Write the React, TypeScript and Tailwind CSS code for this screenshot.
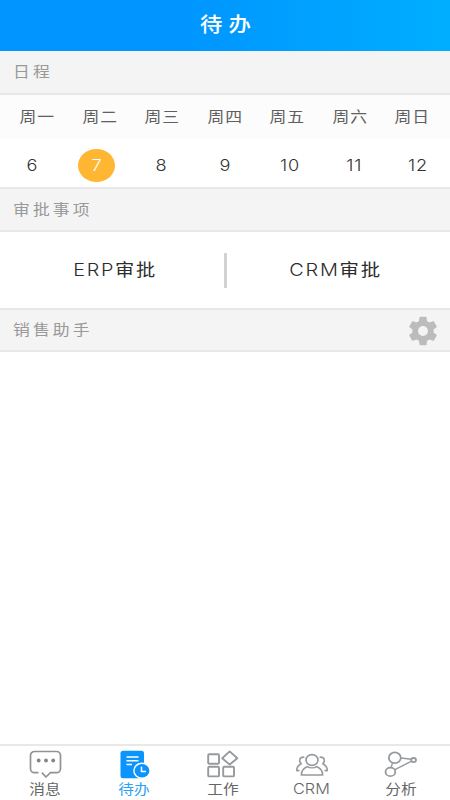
import React from 'react';

const days = ['周一', '周二', '周三', '周四', '周五', '周六', '周日'];
const dates = [6, 7, 8, 9, 10, 11, 12];

function Section({ title, className, children }: { title: string; className: string; children?: React.ReactNode }) {
  return (
    <div className={`flex shrink-0 items-center justify-between border-b-2 border-[#e8e8e8] bg-[#f4f4f4] pl-[13px] pr-[10px] ${className}`}>
      <span className="origin-left scale-x-[1.12] pb-px text-[15px] leading-none tracking-[2.8px] text-[#999]">{title}</span>
      {children}
    </div>
  );
}

function Gear() {
  return (
    <svg width="34" height="34" viewBox="0 0 24 24" fill="#bcbcbc" className="mt-px">
      <path d="M19.43 12.98c.04-.32.07-.64.07-.98s-.03-.66-.07-.98l2.11-1.65c.19-.15.24-.42.12-.64l-2-3.46c-.12-.22-.39-.3-.61-.22l-2.49 1c-.52-.4-1.08-.73-1.69-.98l-.38-2.65A.488.488 0 0 0 14 2h-4c-.25 0-.46.18-.49.42l-.38 2.65c-.61.25-1.17.59-1.69.98l-2.49-1c-.23-.09-.49 0-.61.22l-2 3.46c-.13.22-.07.49.12.64l2.11 1.65c-.04.32-.07.65-.07.98s.03.66.07.98l-2.11 1.65c-.19.15-.24.42-.12.64l2 3.46c.12.22.39.3.61.22l2.49-1c.52.4 1.08.73 1.69.98l.38 2.65c.03.24.24.42.49.42h4c.25 0 .46-.18.49-.42l.38-2.65c.61-.25 1.17-.59 1.69-.98l2.49 1c.23.09.49 0 .61-.22l2-3.46c.12-.22.07-.49-.12-.64l-2.11-1.65zM12 15.5c-1.93 0-3.5-1.57-3.5-3.5s1.57-3.5 3.5-3.5 3.5 1.57 3.5 3.5-1.57 3.5-3.5 3.5z" />
    </svg>
  );
}

const svgProps = { width: 36, height: 32, viewBox: '0 0 36 32', fill: 'none', stroke: '#969a9d' } as const;

function MessageIcon() {
  return (
    <svg {...svgProps} stroke="#929292" strokeWidth="1.7" strokeLinejoin="round">
      <path d="M11.5 24.7H7.5a4 4 0 0 1-4-4V7.5a4 4 0 0 1 4-4h22a4 4 0 0 1 4 4v13.2a4 4 0 0 1-4 4h-6l-4.6 4.3-4-4.3" />
      <g fill="#858585" stroke="none">
        <circle cx="11.7" cy="12.5" r="1.9" />
        <circle cx="19" cy="12.5" r="1.9" />
        <circle cx="26.2" cy="12.5" r="1.9" />
      </g>
    </svg>
  );
}

function TodoIcon() {
  return (
    <svg {...svgProps} stroke="none">
      <rect x="4.5" y="2.7" width="23.5" height="27.5" rx="2.5" fill="#0a94fc" />
      <path d="M10.5 9h12M10.5 12.7h12M10.5 16.4h5.5" stroke="#fff" strokeWidth="1.5" />
      <ellipse cx="26" cy="22.7" rx="8.8" ry="8.3" fill="#fff" />
      <ellipse cx="26" cy="22.7" rx="7.4" ry="6.8" fill="#0a94fc" />
      <path d="M25.5 18.7v4.7h4.5" stroke="#fff" strokeWidth="1.5" />
    </svg>
  );
}

function WorkIcon() {
  return (
    <svg {...svgProps} strokeWidth="1.9" strokeLinejoin="round">
      <rect x="3.2" y="6.2" width="10.8" height="9.6" rx="1" />
      <rect x="3.2" y="18.8" width="10.8" height="9.6" rx="1" />
      <rect x="18.2" y="18.8" width="10.8" height="9.6" rx="1" />
      <path d="M24.7 3.4l7.6 6.8-7.6 6.4-7.5-6.4z" />
    </svg>
  );
}

function PeopleIcon() {
  return (
    <svg {...svgProps} strokeWidth="1.6" strokeLinejoin="round" strokeLinecap="round">
      <ellipse cx="18" cy="12" rx="6" ry="5.4" />
      <path d="M7.3 27c0-4.6 2.4-6.8 6-8.4 2.6 1.6 6.8 1.6 9.4 0 3.6 1.6 6 3.8 6 8.4z" />
      <path d="M9.8 9.2c-4.3-.4-5.3 4-2.6 6.6-2.8 1.4-4.5 3.4-4.5 6.8h2.2M26.2 9.2c4.3-.4 5.3 4 2.6 6.6 2.8 1.4 4.5 3.4 4.5 6.8h-2.2" />
    </svg>
  );
}

function AnalysisIcon() {
  return (
    <svg {...svgProps} strokeWidth="1.8">
      <path d="M18 10l10.4 1.3M9.4 15.2l-1.2 4.1M11.9 21.7l16.7-8.6" strokeWidth="1.4" />
      <ellipse cx="11.8" cy="9.8" rx="6" ry="5.4" />
      <ellipse cx="7.4" cy="23.9" rx="4.9" ry="4.3" />
      <ellipse cx="30.6" cy="12.1" rx="2.4" ry="2.1" />
    </svg>
  );
}

const tabs = [
  { label: '消息', Icon: MessageIcon },
  { label: '待办', Icon: TodoIcon, active: true },
  { label: '工作', Icon: WorkIcon },
  { label: 'CRM', Icon: PeopleIcon, latin: true },
  { label: '分析', Icon: AnalysisIcon },
];

export default function App() {
  return (
    <div className="flex h-[800px] w-[450px] flex-col overflow-hidden bg-white font-['Inter','Noto_Sans_CJK_SC',sans-serif] font-normal">
      <header className="flex h-[51px] shrink-0 items-center justify-center bg-linear-to-r from-[#0095ff] from-40% to-[#00aeff] pb-[2px] pl-[6px]">
        <h1 className="scale-x-[1.12] text-[20px] leading-none font-medium tracking-[5.5px] text-white">待办</h1>
      </header>

      <Section title="日程" className="h-[44px]" />
      <div className="grid h-[44px] shrink-0 grid-cols-7 items-center bg-[#fcfcfc] px-[6px] pb-[2px]">
        {days.map((d) => (
          <span key={d} className="scale-x-[1.12] text-center text-[15px] leading-none tracking-[0.8px] text-[#606060]">{d}</span>
        ))}
      </div>
      <div className="grid h-[50px] shrink-0 grid-cols-7 items-center border-b-2 border-[#e8e8e8] pt-[5px]">
        {dates.map((n) => (
          <div key={n} className="flex justify-center">
            <span className={`flex h-[33px] w-[37px] items-center justify-center rounded-[50%] text-[16.5px] font-light ${n === 7 ? 'bg-[#ffb733] text-white' : 'text-[#333]'}`}>
              <span className="-mr-[0.8px] scale-x-[1.1] tracking-[0.8px]">{n}</span>
            </span>
          </div>
        ))}
      </div>

      <Section title="审批事项" className="h-[43px]" />
      <div className="flex h-[76px] shrink-0 items-center text-[17px] tracking-[1.5px] text-[#2c2c2c]">
        <div className="flex w-[224px] justify-center pl-[7px]"><span className="scale-x-[1.13]"><span className="text-[17.5px] font-light">ERP</span>审批</span></div>
        <div className="h-[35px] w-[3px] bg-[#d2d2d2]" />
        <div className="flex w-[217px] justify-center"><span className="scale-x-[1.14]"><span className="text-[17.5px] font-light">CRM</span>审批</span></div>
      </div>
      <Section title="销售助手" className="h-[44px] border-t-2">
        <Gear />
      </Section>

      <main className="flex-1" />

      <nav className="grid h-[56px] shrink-0 grid-cols-5 border-t-2 border-[#e8e8e8] pr-[5px]">
        {tabs.map(({ label, Icon, active, latin }) => (
          <div key={label} className="flex flex-col items-center pt-[2px]">
            <Icon />
            <span className={`-mt-px scale-x-[1.12] leading-[20px] ${latin ? 'text-[14.5px] font-light' : 'text-[14px]'} ${active ? 'text-[#2ba0f5]' : 'text-[#666]'}`}>{label}</span>
          </div>
        ))}
      </nav>
    </div>
  );
}
